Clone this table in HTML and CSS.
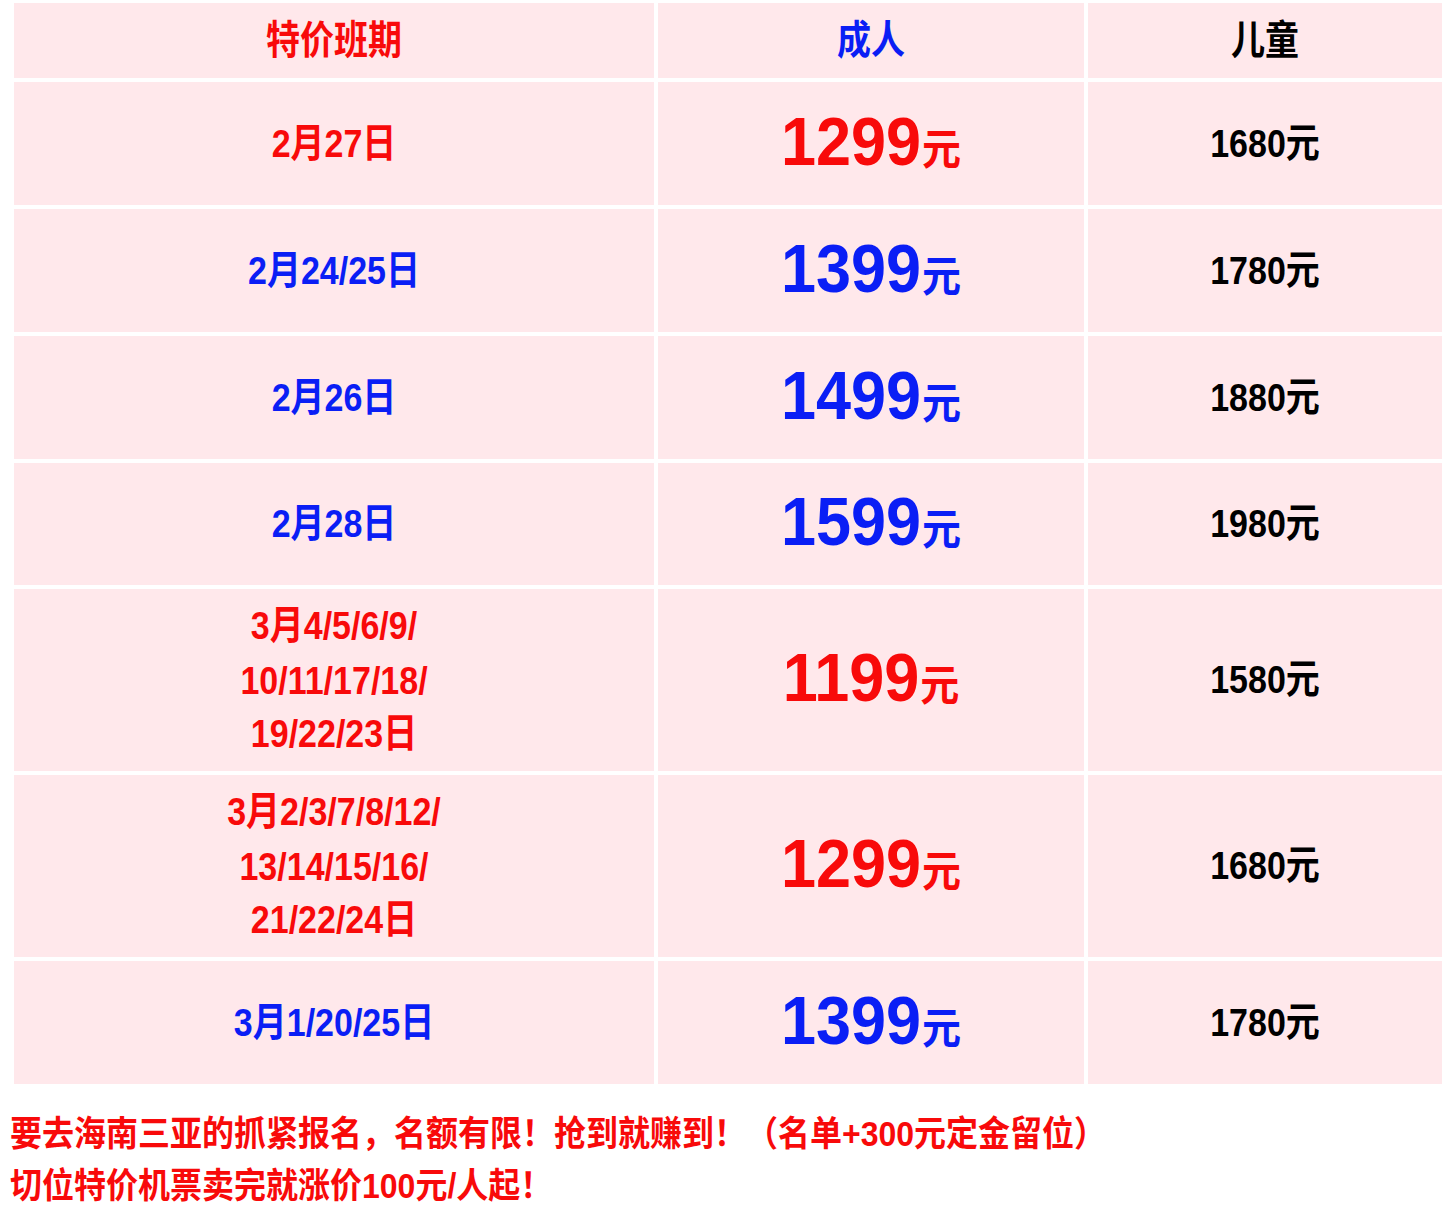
FILE: index.html
```html
<!DOCTYPE html>
<html lang="zh">
<head>
<meta charset="utf-8">
<title>特价班期</title>
<link rel="stylesheet" href="styles.css">
</head>
<body>
<div class="table">
  <div class="cell head red"><span class="t">特价班期</span></div>
  <div class="cell head blue"><span class="t">成人</span></div>
  <div class="cell head black"><span class="t">儿童</span></div>

  <div class="cell date red"><span class="t">2月27日</span></div>
  <div class="cell price red"><span class="t"><span class="num">1299</span><span class="yuan">元</span></span></div>
  <div class="cell child"><span class="t">1680元</span></div>

  <div class="cell date blue"><span class="t">2月24/25日</span></div>
  <div class="cell price blue"><span class="t"><span class="num">1399</span><span class="yuan">元</span></span></div>
  <div class="cell child"><span class="t">1780元</span></div>

  <div class="cell date blue"><span class="t">2月26日</span></div>
  <div class="cell price blue"><span class="t"><span class="num">1499</span><span class="yuan">元</span></span></div>
  <div class="cell child"><span class="t">1880元</span></div>

  <div class="cell date blue"><span class="t">2月28日</span></div>
  <div class="cell price blue"><span class="t"><span class="num">1599</span><span class="yuan">元</span></span></div>
  <div class="cell child"><span class="t">1980元</span></div>

  <div class="cell date red multi"><span class="t">3月4/5/6/9/<br>10/11/17/18/<br>19/22/23日</span></div>
  <div class="cell price red"><span class="t"><span class="num">1199</span><span class="yuan">元</span></span></div>
  <div class="cell child"><span class="t">1580元</span></div>

  <div class="cell date red multi"><span class="t">3月2/3/7/8/12/<br>13/14/15/16/<br>21/22/24日</span></div>
  <div class="cell price red"><span class="t"><span class="num">1299</span><span class="yuan">元</span></span></div>
  <div class="cell child"><span class="t">1680元</span></div>

  <div class="cell date blue"><span class="t">3月1/20/25日</span></div>
  <div class="cell price blue"><span class="t"><span class="num">1399</span><span class="yuan">元</span></span></div>
  <div class="cell child"><span class="t">1780元</span></div>
</div>
<div class="notes">
  <p class="note"><span class="nt">要去海南三亚的抓紧报名，名额有限！抢到就赚到！（名单+300元定金留位）</span></p>
  <p class="note"><span class="nt">切位特价机票卖完就涨价100元/人起！</span></p>
</div>
</body>
</html>
```

FILE: styles.css
```css
html, body {
  margin: 0;
  padding: 0;
  background: #ffffff;
}

body {
  padding: 3px 0 0 0;
  font-family: "Liberation Sans", "Noto Sans CJK SC", sans-serif;
  font-weight: bold;
}

.table {
  margin-left: 14px;
  width: 1428px;
  display: grid;
  grid-template-columns: 640px 426px 354px;
  grid-template-rows: 75px 123px 123px 123px 122px 182px 182px 123px;
  gap: 4px;
}

.cell {
  background: #ffe8eb;
  display: flex;
  align-items: center;
  justify-content: center;
  text-align: center;
  font-size: 34px;
  line-height: 46px;
}

.t {
  display: inline-block;
  transform: scaleY(1.16);
}

.red { color: #f80a0a; }
.blue { color: #0a1ef5; }
.black { color: #000000; }

.head {
  padding-bottom: 2px;
}

.date {
  padding-bottom: 2px;
}

.multi {
  line-height: 46.5px;
  padding-bottom: 0;
}

.child {
  color: #000000;
  padding-bottom: 2px;
}

.price {
  padding-top: 4px;
}

.price .t {
  transform: scaleY(1.1);
  line-height: 70px;
}

.num {
  font-size: 63px;
}

.yuan {
  font-size: 39px;
  margin-left: 1px;
}

.notes {
  margin: 24px 0 0 10px;
}

.note {
  margin: 0;
  color: #f80a0a;
  font-size: 32px;
  line-height: 52px;
}

.nt {
  display: inline-block;
  transform: scaleY(1.1);
}
```
